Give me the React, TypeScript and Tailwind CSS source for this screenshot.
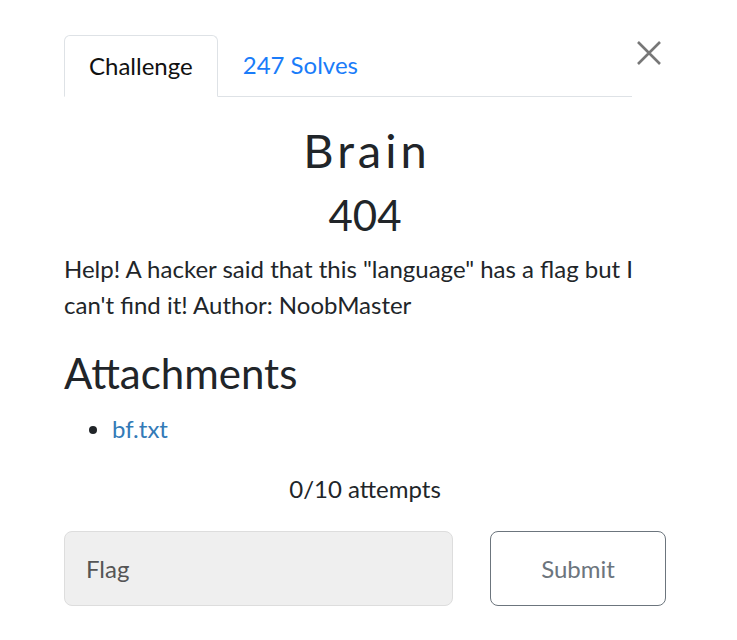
import React from "react";

const App = () => {
  return (
    <div className="min-h-[640px] bg-white text-[#212529]" style={{ fontFamily: "Lato, 'Open Sans', sans-serif" }}>
      <div className="ml-[64px] w-[602px] pt-[35px]">
        <div className="flex items-start">
          <ul className="flex flex-1 border-b border-[#dee2e6]">
            <li className="-mb-px rounded-t-[6px] border border-[#dee2e6] border-b-white bg-white px-[24px] py-[12px] text-[24px] leading-[36px] text-[#111]">
              Challenge
            </li>
            <li className="px-[25px] py-[12px] text-[24px] leading-[36px] text-[#1a7cf9]">247 Solves</li>
          </ul>
          <button className="flex h-[34px] w-[34px] items-center justify-center mt-[1px]">
            <svg width="28" height="28" viewBox="0 0 28 28" fill="none" stroke="#777" strokeWidth="2.6">
              <path d="M3 3 L25 25 M25 3 L3 25" />
            </svg>
          </button>
        </div>

        <h2 className="mt-[25px] pl-[4px] text-center text-[47px] leading-[56px] tracking-[4px]">Brain</h2>
        <h3 className="mt-[11px] text-center text-[42px] leading-[52px]">404</h3>

        <p className="mt-[10px] text-[24px] leading-[36px]">
          Help! A hacker said that this "language" has a flag but I can't find it! Author: NoobMaster
        </p>

        <h3 className="mt-[25px] text-[42px] leading-[50px]">Attachments</h3>
        <ul className="mt-[13px] list-disc pl-[48px] text-[24px] leading-[36px]">
          <li className="marker:text-[#212529]">
            <a className="text-[#337ab7]">bf.txt</a>
          </li>
        </ul>

        <p className="mt-[24px] text-center text-[24px] leading-[36px]">0/10 attempts</p>

        <div className="mt-[24px] flex items-center">
          <div className="flex h-[75px] w-[389px] items-center rounded-[8px] border border-[#dddddd] bg-[#efefef] px-[21px] text-[24px] text-[#555]">
            Flag
          </div>
          <button className="ml-auto h-[75px] w-[176px] rounded-[8px] border border-[#6c757d] bg-white text-[24px] text-[#6c757d]">
            Submit
          </button>
        </div>
      </div>
    </div>
  );
};

export default App;
